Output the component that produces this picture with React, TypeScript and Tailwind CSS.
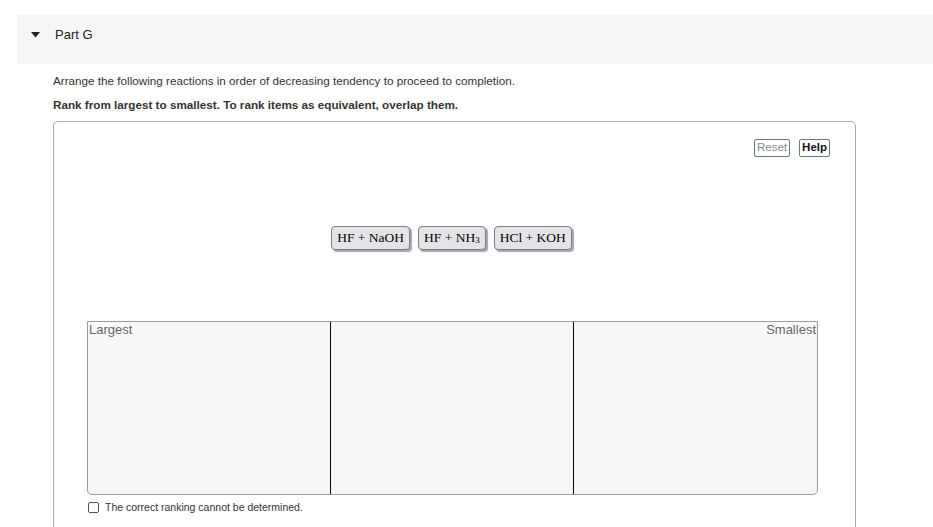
const items = [
  { id: "a", label: <>HF + NaOH</> },
  { id: "b", label: <>HF + NH<sub className="text-[9px] align-[-3px]">3</sub></> },
  { id: "c", label: <>HCl + KOH</> },
];

const App = () => {
  return (
    <div className="min-h-[527px] bg-white font-['Liberation_Sans',Arial,sans-serif] text-[#222] pt-[15px] overflow-hidden">
      <div className="ml-[17px] h-[49px] bg-[#f6f6f6] flex items-center">
        <svg width="9" height="6" viewBox="0 0 9 6" className="ml-[14px] mt-[-10px]">
          <path d="M0 0 L9 0 L4.5 5.5 Z" fill="#222" />
        </svg>
        <span className="ml-[15px] text-[13px] mt-[-10px]">Part G</span>
      </div>

      <div className="pl-[53px]">
        <p className="mt-[10px] text-[11.7px] leading-[14px] text-[#333]">
          Arrange the following reactions in order of decreasing tendency to proceed to completion.
        </p>
        <p className="mt-[10px] text-[11.7px] leading-[14px] font-bold text-[#333]">
          Rank from largest to smallest. To rank items as equivalent, overlap them.
        </p>

        <div className="mt-[9px] w-[803px] h-[420px] border border-[#aaa] rounded-[5px] relative">
          <div className="flex justify-end gap-[9px] pr-[25px] pt-[17px]">
            <button className="h-[18px] px-[2px] border border-[#5f7a80] rounded-[2px] text-[11.5px] text-[#888] leading-none">
              Reset
            </button>
            <button className="h-[18px] px-[2px] border border-[#5f7a80] rounded-[2px] text-[11.5px] font-bold text-[#111] leading-none">
              Help
            </button>
          </div>

          <div className="flex justify-center gap-[8px] mt-[69px] ml-[-6px]">
            {items.map((it) => (
              <div
                key={it.id}
                className="h-[24px] px-[5px] flex items-center bg-[#e4e4e6] border border-[#7d7d8c] rounded-[4px] shadow-[2px_2px_1px_rgba(90,90,110,0.55)] font-['Liberation_Serif','Times_New_Roman',serif] text-[13.5px] text-black whitespace-nowrap"
              >
                {it.label}
              </div>
            ))}
          </div>

          <div className="mt-[71px] ml-[33px] w-[731px] h-[174px] bg-[#f6f6f6] border border-[#9a9aab] rounded-b-[5px] grid grid-cols-3">
            <div className="relative border-r border-black">
              <span className="absolute left-[1px] top-0 bg-[#fafafa] pr-[3px] text-[13px] leading-[15px] text-[#666]">Largest</span>
            </div>
            <div className="border-r border-black" />
            <div className="relative">
              <span className="absolute right-[1px] top-0 bg-[#fafafa] pl-[3px] text-[13px] leading-[15px] text-[#666]">Smallest</span>
            </div>
          </div>

          <label className="mt-[5px] ml-[34px] flex items-center gap-[6px]">
            <span className="w-[11px] h-[11px] border border-[#555] rounded-[2px] bg-white" />
            <span className="text-[10.5px] text-[#333]">The correct ranking cannot be determined.</span>
          </label>
        </div>
      </div>
    </div>
  );
};

export default App;
